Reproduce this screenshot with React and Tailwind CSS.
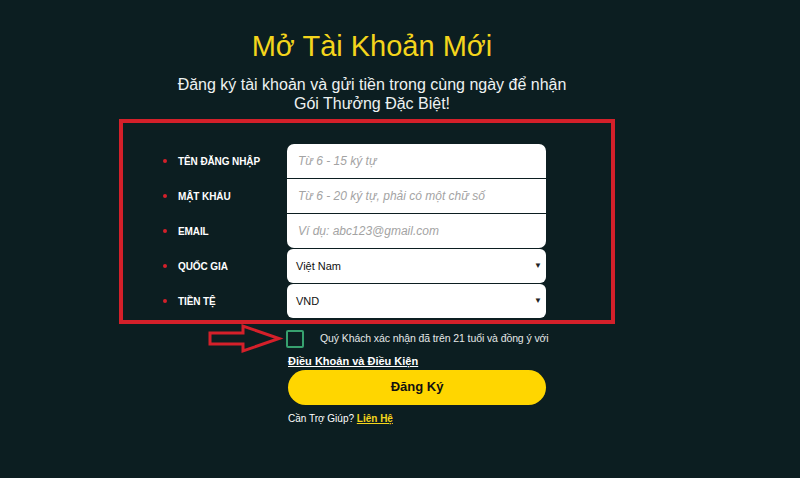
import { Fragment } from 'react'

const fields = [
  { label: 'TÊN ĐĂNG NHẬP', placeholder: 'Từ 6 - 15 ký tự', shape: 'rounded-t-[7px]' },
  { label: 'MẬT KHẨU', placeholder: 'Từ 6 - 20 ký tự, phải có một chữ số', shape: '' },
  { label: 'EMAIL', placeholder: 'Ví dụ: abc123@gmail.com', shape: 'rounded-b-[7px]' },
]

const selects = [
  { label: 'QUỐC GIA', value: 'Việt Nam' },
  { label: 'TIỀN TỆ', value: 'VND' },
]

function Label({ text }) {
  return (
    <div className="flex items-center pl-10">
      <span className="h-[4px] w-[4px] rounded-full bg-[#d4202a]" />
      <span className="ml-[11px] text-[10px] font-bold tracking-[-0.1px] text-white">{text}</span>
    </div>
  )
}

export default function App() {
  return (
    <div className="relative h-[478px] w-full overflow-hidden bg-[#0c1e21]" style={{ fontFamily: '"Liberation Sans", Arial, sans-serif' }}>
      <div className="ml-[119px] w-[506px] pt-[28px]">
        <h1 className="text-center text-[29px] leading-[36px] text-[#f4d51c]">Mở Tài Khoản Mới</h1>
        <p className="mt-[11px] text-center text-[16px] leading-[19px] text-[#eef2f2]">
          Đăng ký tài khoản và gửi tiền trong cùng ngày để nhận
          <br />
          Gói Thưởng Đặc Biệt!
        </p>
      </div>

      <div className="ml-[119px] mt-[6px] w-[496px] border-4 border-[#d4202a] pb-[2px] pt-[21px]">
        <div className="grid grid-cols-[164px_259px] gap-y-px">
          {fields.map((f) => (
            <Fragment key={f.label}>
              <Label text={f.label} />
              <div className={`flex h-[34px] items-center bg-white pl-[11px] ${f.shape}`}>
                <span className="text-[12px] italic text-[#a3a3a3]">{f.placeholder}</span>
              </div>
            </Fragment>
          ))}
          {selects.map((s) => (
            <Fragment key={s.label}>
              <Label text={s.label} />
              <div className="flex h-[34px] items-center justify-between rounded-[6px] bg-white pl-[9px] pr-[4px]">
                <span className="text-[11px] text-[#111]">{s.value}</span>
                <span className="text-[8px] text-[#222]">▼</span>
              </div>
            </Fragment>
          ))}
        </div>
      </div>

      <div className="ml-[286px] mt-[6px] w-[261px]">
        <div className="flex h-[18px] items-center">
          <span className="h-[18px] w-[18px] shrink-0 rounded-[2px] border-2 border-[#37a16f]" />
          <span className="ml-[16px] whitespace-nowrap text-[10.5px] tracking-[-0.1px] text-[#e4e8e8]">Quý Khách xác nhận đã trên 21 tuổi và đồng ý với</span>
        </div>
        <div className="ml-[2px] mt-[5px] text-[11px] font-bold text-white underline">Điều Khoản và Điều Kiện</div>
        <button className="ml-[2px] flex h-[35px] w-[258px] items-center justify-center rounded-full bg-[#ffd600] text-[13px] font-bold text-[#111]">
          Đăng Ký
        </button>
        <div className="ml-[2px] mt-[6px] text-[10px] text-white">
          Cần Trợ Giúp? <span className="font-bold text-[#f4d51c] underline">Liên Hệ</span>
        </div>
      </div>

      <svg className="absolute left-[205px] top-[320px]" width="80" height="36" viewBox="0 0 80 36">
        <polygon points="5,13 38,13 38,6 74,18.5 38,31 38,24 5,24" fill="none" stroke="#d4202a" strokeWidth="3" strokeLinejoin="miter" />
      </svg>
    </div>
  )
}
